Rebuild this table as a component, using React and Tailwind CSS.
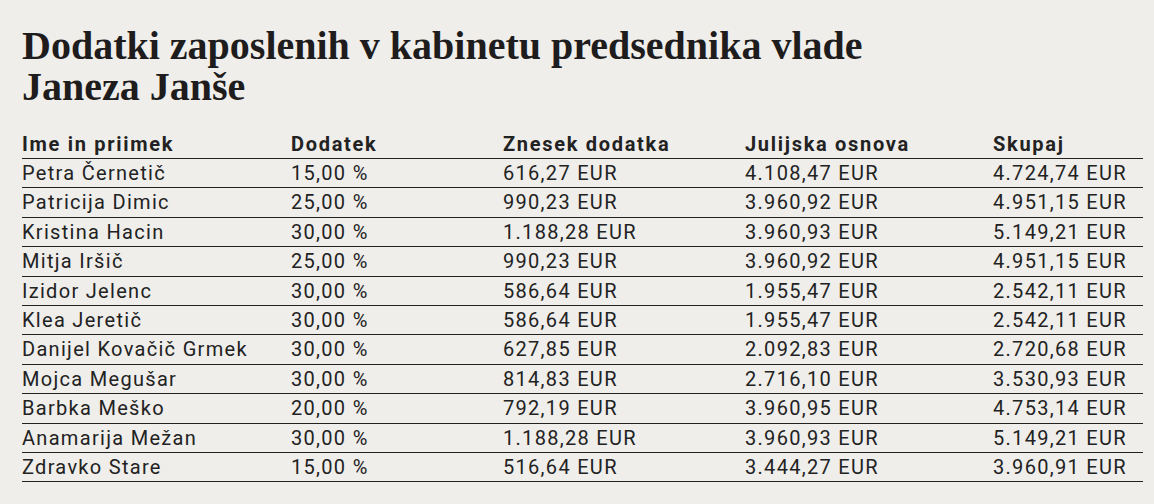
import React from "react";

const rows = [
  ["Petra Černetič", "15,00 %", "616,27 EUR", "4.108,47 EUR", "4.724,74 EUR"],
  ["Patricija Dimic", "25,00 %", "990,23 EUR", "3.960,92 EUR", "4.951,15 EUR"],
  ["Kristina Hacin", "30,00 %", "1.188,28 EUR", "3.960,93 EUR", "5.149,21 EUR"],
  ["Mitja Iršič", "25,00 %", "990,23 EUR", "3.960,92 EUR", "4.951,15 EUR"],
  ["Izidor Jelenc", "30,00 %", "586,64 EUR", "1.955,47 EUR", "2.542,11 EUR"],
  ["Klea Jeretič", "30,00 %", "586,64 EUR", "1.955,47 EUR", "2.542,11 EUR"],
  ["Danijel Kovačič Grmek", "30,00 %", "627,85 EUR", "2.092,83 EUR", "2.720,68 EUR"],
  ["Mojca Megušar", "30,00 %", "814,83 EUR", "2.716,10 EUR", "3.530,93 EUR"],
  ["Barbka Meško", "20,00 %", "792,19 EUR", "3.960,95 EUR", "4.753,14 EUR"],
  ["Anamarija Mežan", "30,00 %", "1.188,28 EUR", "3.960,93 EUR", "5.149,21 EUR"],
  ["Zdravko Stare", "15,00 %", "516,64 EUR", "3.444,27 EUR", "3.960,91 EUR"],
];

const headers = ["Ime in priimek", "Dodatek", "Znesek dodatka", "Julijska osnova", "Skupaj"];

function App() {
  return (
    <div className="min-h-screen bg-[#efeeeb] text-[#1e1c1c] px-[22px] pt-[25px]">
      <h1 className="font-['Liberation_Serif',serif] font-bold text-[40px] leading-[41px] tracking-[0em]">
        Dodatki zaposlenih v kabinetu predsednika vlade
        <br />
        Janeza Janše
      </h1>
      <div className="mt-[23px] w-[1121px] font-['Roboto',sans-serif] text-[20px] text-[#222]">
        <div className="grid grid-cols-[269px_212px_242px_248px_1fr] border-b border-[#222] leading-[28px] font-bold tracking-[0.085em]">
          {headers.map((h) => (
            <div key={h}>{h}</div>
          ))}
        </div>
        {rows.map((r) => (
          <div
            key={r[0]}
            className="grid grid-cols-[269px_212px_242px_248px_1fr] border-b border-[#222] leading-[28.4px] tracking-[0.065em]"
          >
            {r.map((c, i) => (
              <div key={i}>{c}</div>
            ))}
          </div>
        ))}
      </div>
    </div>
  );
}

export default App;
